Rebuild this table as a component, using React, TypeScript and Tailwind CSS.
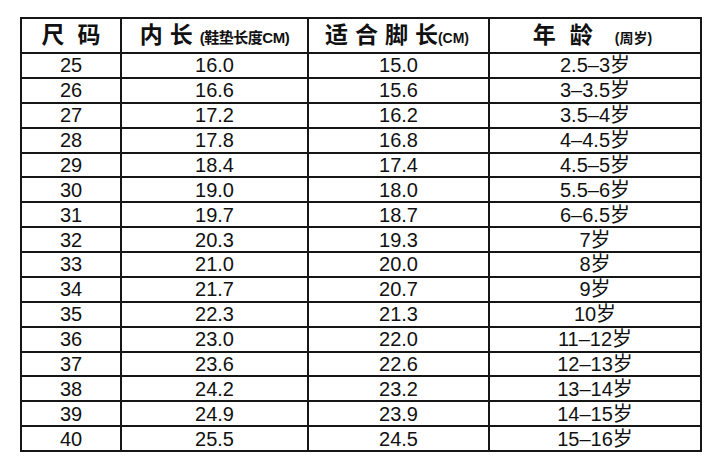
const rows: [string, string, string, string][] = [
  ['25', '16.0', '15.0', '2.5–3岁'],
  ['26', '16.6', '15.6', '3–3.5岁'],
  ['27', '17.2', '16.2', '3.5–4岁'],
  ['28', '17.8', '16.8', '4–4.5岁'],
  ['29', '18.4', '17.4', '4.5–5岁'],
  ['30', '19.0', '18.0', '5.5–6岁'],
  ['31', '19.7', '18.7', '6–6.5岁'],
  ['32', '20.3', '19.3', '7岁'],
  ['33', '21.0', '20.0', '8岁'],
  ['34', '21.7', '20.7', '9岁'],
  ['35', '22.3', '21.3', '10岁'],
  ['36', '23.0', '22.0', '11–12岁'],
  ['37', '23.6', '22.6', '12–13岁'],
  ['38', '24.2', '23.2', '13–14岁'],
  ['39', '24.9', '23.9', '14–15岁'],
  ['40', '25.5', '24.5', '15–16岁'],
];

const cell = 'border-2 border-[#161616] p-0 text-center align-middle';
const big = 'text-[23px] font-bold leading-none';
const small = 'text-[14px] font-bold leading-none';

export default function App() {
  return (
    <div className="w-[718px] h-[457px] bg-white pl-[20px] pt-[17px] font-['Liberation_Sans','Noto_Sans_CJK_SC',sans-serif] text-[#111]">
      <table className="border-collapse table-fixed w-[680px]">
        <colgroup>
          <col className="w-[100px]" />
          <col className="w-[187px]" />
          <col className="w-[181px]" />
          <col className="w-[212px]" />
        </colgroup>
        <thead>
          <tr className="h-[35px]">
            <th className={cell}>
              <div className="flex items-center justify-center gap-[13px]">
                <span className={big}>尺</span>
                <span className={big}>码</span>
              </div>
            </th>
            <th className={cell}>
              <div className="flex items-end justify-center gap-[7px]">
                <span className={big}>内</span>
                <span className={big}>长</span>
                <span className={`${small} mb-[2px] text-[15px] tracking-[-0.5px]`}>(鞋垫长度CM)</span>
              </div>
            </th>
            <th className={cell}>
              <div className="flex items-end justify-center gap-[7px] pr-[3px]">
                <span className={big}>适</span>
                <span className={big}>合</span>
                <span className={big}>脚</span>
                <span className={big}>长</span>
                <span className={`${small} mb-[2px] -ml-[7px]`}>(CM)</span>
              </div>
            </th>
            <th className={cell}>
              <div className="flex items-end justify-center pr-[5px]">
                <span className={big}>年</span>
                <span className={`${big} ml-[14px]`}>龄</span>
                <span className={`${small} ml-[22px] mb-[2px]`}>(周岁)</span>
              </div>
            </th>
          </tr>
        </thead>
        <tbody>
          {rows.map((r) => (
            <tr key={r[0]} className="h-[24.875px] text-[20px] leading-none">
              {r.map((v, i) => (
                <td key={i} className={cell}>
                  {v}
                </td>
              ))}
            </tr>
          ))}
        </tbody>
      </table>
    </div>
  );
}
